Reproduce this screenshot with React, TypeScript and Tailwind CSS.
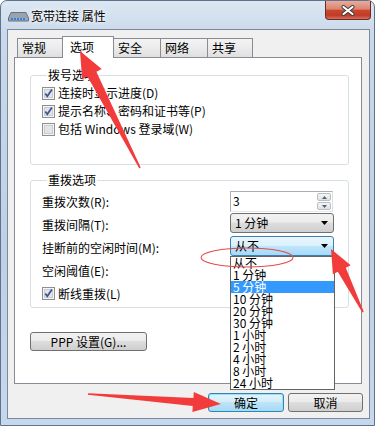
import React from "react";

const Check = ({ on }: { on: boolean }) => (
  <svg width="13" height="13" viewBox="0 0 13 13" className="shrink-0">
    <rect x="0.5" y="0.5" width="12" height="12" fill="#f4f4f4" stroke="#8e8f8f" />
    <rect x="2.5" y="2.5" width="8" height="8" fill="#e2e4e7" stroke="#c9cbcf" />
    {on && <path d="M3.3 6.4 5.3 9.2 9.9 2.6" fill="none" stroke="#3f5591" strokeWidth="1.8" />}
  </svg>
);

const Caret = () => (
  <svg width="7" height="4" viewBox="0 0 7 4">
    <path d="M0 0h7L3.5 4z" fill="#000" />
  </svg>
);

const grayBtn =
  "rounded-[3px] border border-[#707070] bg-[linear-gradient(#f2f2f2,#ebebeb_45%,#dddddd_50%,#cfcfcf)]";

const intervals = ["从不", "1 分钟", "5 分钟", "10 分钟", "20 分钟", "30 分钟", "1 小时", "2 小时", "4 小时", "8 小时", "24 小时"];

const tabs = [
  { label: "常规", w: "w-[46px]" },
  { label: "选项", w: "w-[52px]", active: true },
  { label: "安全", w: "w-[48px]" },
  { label: "网络", w: "w-[48px]" },
  { label: "共享", w: "w-[46px]" },
];

export default function App() {
  return (
    <div className="relative h-[426px] w-[377px] overflow-hidden bg-white font-['Noto_Sans_CJK_SC',sans-serif] text-[12px] text-black">
      {/* window frame */}
      <div className="flex h-full w-[375px] flex-col rounded-t-[7px] border border-[#5f738c] bg-[linear-gradient(180deg,#dce7f3,#c9d8ea_8%,#bfd0e6_60%,#c7d8ee)] pl-[6px]">
        {/* title bar */}
        <div className="flex h-[28px] items-start">
          <svg width="21" height="11" viewBox="0 0 21 11" className="mt-[10px] ml-[1px]">
            <path d="M3 1.5h15l2.5 5.5v3H.5V7z" fill="#9aa3ad" stroke="#6a737d" />
            <rect x="3" y="7" width="15" height="2" fill="#3c7fd0" />
            <path d="M5 8h1m2 0h1m2 0h1m2 0h1m2 0h1" stroke="#dff0ff" />
          </svg>
          <span className="mt-[7px] ml-[2px] leading-[16px] [text-shadow:0_0_6px_#fff,0_0_3px_#fff]">宽带连接 属性</span>
          <div className="ml-auto mr-[3px] flex h-[19px] w-[46px] items-center justify-center rounded-b-[4px] border border-t-0 border-[#6e2b20] bg-[linear-gradient(#e9ab9c,#db8470_45%,#c9462e_52%,#c23b28_80%,#d27260)]">
            <svg width="14" height="11" viewBox="0 0 14 11">
              <path d="M2.5 2 11.5 9M11.5 2 2.5 9" stroke="#3b3b3b" strokeWidth="4" strokeLinecap="round" />
              <path d="M2.5 2 11.5 9M11.5 2 2.5 9" stroke="#fff" strokeWidth="2.2" strokeLinecap="round" />
            </svg>
          </div>
        </div>

        {/* dialog body */}
        <div className="flex h-[390px] w-[363px] flex-col border border-[#7c8998] bg-[#f0f0f0] pt-[6px]">
          <div className="ml-[6px] flex w-[348px] flex-col">
            {/* tabs */}
            <div className="relative z-10 flex h-[21px] items-end pl-[3px]">
              {tabs.map((t, i) =>
                t.active ? (
                  <div
                    key={t.label}
                    className={`${t.w} -ml-px -mb-px flex h-[22px] items-start border border-b-0 border-[#898c95] bg-white pl-[7px] pt-[2px] leading-[16px]`}
                  >
                    {t.label}
                  </div>
                ) : (
                  <div
                    key={t.label}
                    className={`${t.w} ${i === 0 ? "" : "-ml-px"} flex h-[19px] items-center border border-b-0 border-[#898c95] bg-[linear-gradient(#f3f3f3,#ebebeb_50%,#dfdfdf)] pl-[4px] leading-[16px]`}
                  >
                    {t.label}
                  </div>
                )
              )}
            </div>

            {/* tab panel */}
            <div className="flex h-[327px] flex-col border border-[#898c95] bg-white pl-[15px]">
              <fieldset className="mt-[10px] w-[319px] rounded-[3px] border border-[#d5dfe5] pb-[26px] pl-[11px] pt-[2px]">
                <legend className="ml-[5px] px-[1px] leading-[14px]">拨号选项</legend>
                {[
                  { on: true, text: "连接时显示进度(D)" },
                  { on: true, text: "提示名称、密码和证书等(P)" },
                  { on: false, text: "包括 Windows 登录域(W)" },
                ].map((r) => (
                  <div key={r.text} className="flex h-[18px] items-center gap-[3px] leading-[14px]">
                    <Check on={r.on} />
                    <span>{r.text}</span>
                  </div>
                ))}
              </fieldset>

              <fieldset className="mt-[8px] w-[319px] rounded-[3px] border border-[#d5dfe5] pb-[2px] pl-[11px] pt-[3px]">
                <legend className="ml-[5px] px-[1px] leading-[14px]">重拨选项</legend>
                <div className="grid grid-cols-[188px_104px] auto-rows-[23px] leading-[14px]">
                  <span className="self-center">重拨次数(R):</span>
                  <div className="mt-[1px] flex h-[21px] w-[103px] border border-[#abadb3] border-b-[#e3e9ef] border-r-[#dbdfe6] bg-white">
                    <span className="flex-1 pl-[2px] pt-[2px]">3</span>
                    <div className="flex w-[15px] flex-col gap-[1px] py-[1px] pr-[1px]">
                      {[0, 1].map((k) => (
                        <div key={k} className="flex flex-1 items-center justify-center rounded-[2px] border border-[#b9bdc4] bg-[linear-gradient(#f5f5f5,#e0e0e0)]">
                          <svg width="5" height="3" viewBox="0 0 5 3">
                            <path d={k === 0 ? "M0 3h5L2.5 0z" : "M0 0h5L2.5 3z"} fill="#4d6185" />
                          </svg>
                        </div>
                      ))}
                    </div>
                  </div>

                  <span className="self-center">重拨间隔(T):</span>
                  <div className={`${grayBtn} flex h-[20px] w-[104px] items-center justify-between pl-[4px] pr-[5px]`}>
                    <span>1 分钟</span>
                    <Caret />
                  </div>

                  <span className="self-center">挂断前的空闲时间(M):</span>
                  <div className="relative z-20 h-[20px] w-[104px]">
                    <div className="flex h-full items-center justify-between rounded-[3px] border border-[#3c7fb1] bg-[linear-gradient(#eaf6fd,#d9f0fc_50%,#bee6fd_50%,#a7d9f5)] pl-[4px] pr-[5px]">
                      <span>从不</span>
                      <Caret />
                    </div>
                    <div className="absolute left-0 top-full w-[105px] border border-[#646464] bg-white">
                      {intervals.map((v, i) => (
                        <div
                          key={v}
                          className={`h-[12px] pl-[2px] leading-[12px] ${i === 2 ? "bg-[#3399ff] text-white" : ""}`}
                        >
                          {v}
                        </div>
                      ))}
                    </div>
                  </div>

                  <span className="self-center">空闲阈值(E):</span>
                  <div className={`${grayBtn} h-[20px] w-[104px]`} />

                  <div className="col-span-2 flex items-center gap-[3px]">
                    <Check on />
                    <span>断线重拨(L)</span>
                  </div>
                </div>
              </fieldset>

              <div className={`${grayBtn} mt-[24px] flex h-[19px] w-[117px] items-center justify-center leading-[14px]`}>
                PPP 设置(G)...
              </div>
            </div>
          </div>

          {/* dialog buttons */}
          <div className="mt-[9px] flex justify-end gap-[4px] pr-[6px] leading-[14px]">
            <div className="flex h-[19px] w-[76px] items-center justify-center rounded-[3px] border border-[#3c7fb1] bg-[linear-gradient(#e3f3fb,#d3ecf9_50%,#bde4f8_50%,#a9d9f3)] shadow-[inset_0_0_0_1px_#8ee4fb]">
              确定
            </div>
            <div className={`${grayBtn} flex h-[19px] w-[75px] items-center justify-center`}>取消</div>
          </div>
        </div>
      </div>

      {/* annotations */}
      <svg className="pointer-events-none absolute inset-0 z-30" width="377" height="426" viewBox="0 0 377 426">
        <polygon points="80,51 101.7,69.1 96.4,71.8 140.7,167.6 139.3,168.4 87.4,76.4 82.1,79.1" fill="#f23c3c" />
        <polygon points="331,249 350.7,265.2 345.8,267.7 363.7,311.6 362.3,312.4 337.8,271.7 332.9,274.2" fill="#f23c3c" />
        <polygon points="221,404 193.8,391.9 193.4,397.9 88.1,393.2 87.9,394.8 192.8,405.9 192.4,411.9" fill="#f23c3c" />
        <ellipse cx="247" cy="257.5" rx="46" ry="9.5" fill="none" stroke="#e84848" strokeWidth="1.1" />
      </svg>
    </div>
  );
}
